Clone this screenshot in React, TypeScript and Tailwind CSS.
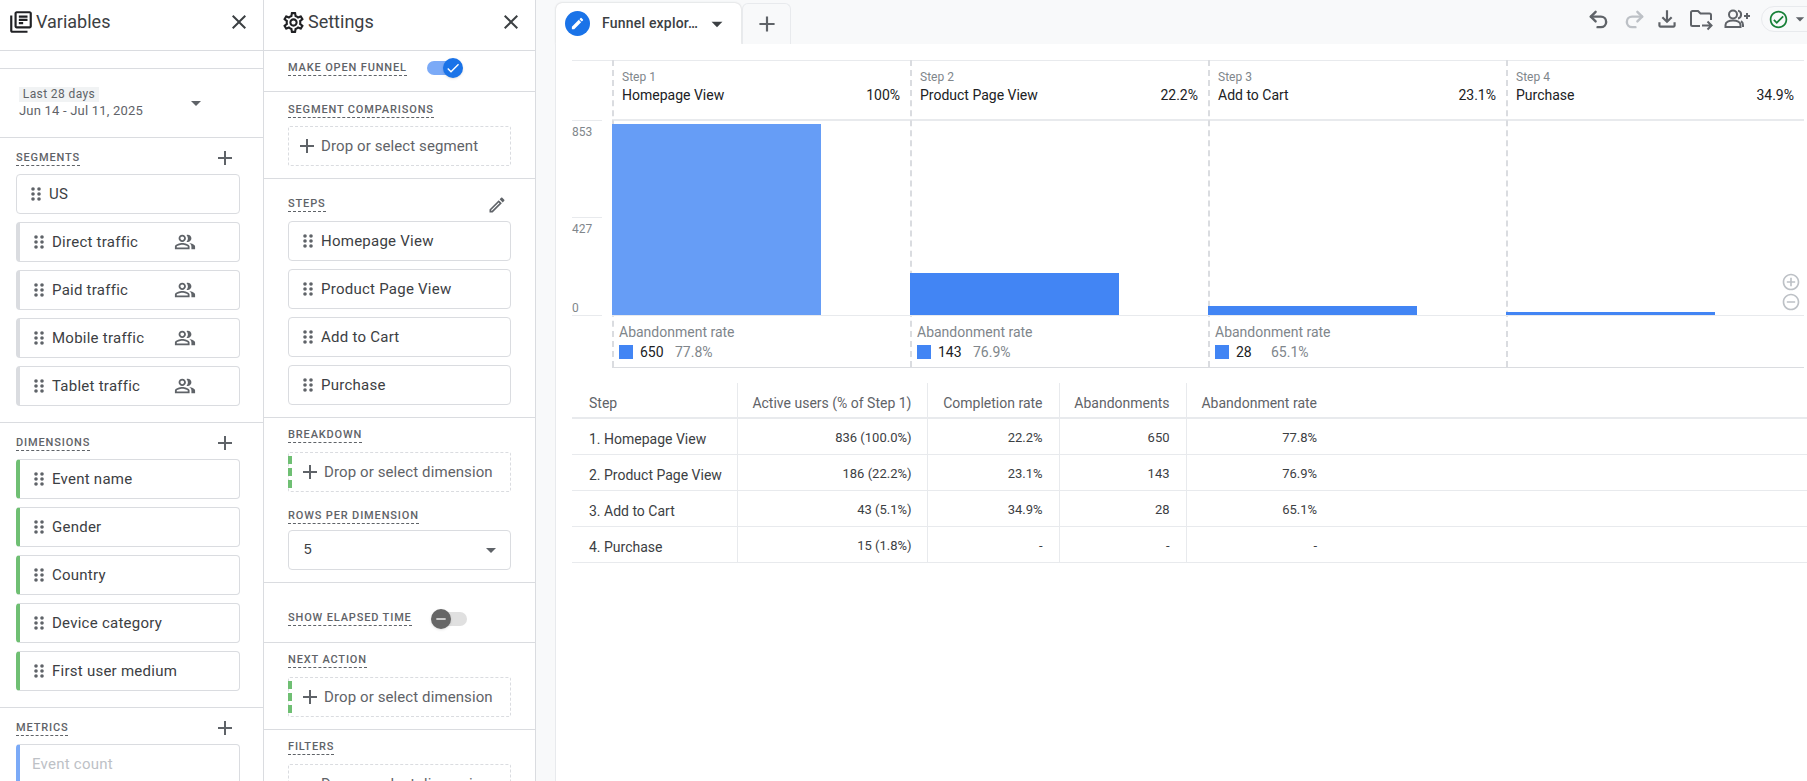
import { Redo2, Undo2 } from "lucide-react";
import {
  MdAdd,
  MdAddCircleOutline,
  MdArrowDropDown,
  MdCheck,
  MdClose,
  MdEdit,
  MdOutlineCheckCircle,
  MdOutlineEdit,
  MdOutlineFileDownload,
  MdOutlineLibraryBooks,
  MdOutlinePeopleAlt,
  MdOutlineSettings,
  MdRemove,
  MdRemoveCircleOutline,
} from "react-icons/md";

const segments = ["Direct traffic", "Paid traffic", "Mobile traffic", "Tablet traffic"];
const dimensions = ["Event name", "Gender", "Country", "Device category", "First user medium"];
const steps = ["Homepage View", "Product Page View", "Add to Cart", "Purchase"];

const funnel = [
  { step: "Step 1", name: "Homepage View", pct: "100%", bar: "h-[191px] bg-[#669df6]", count: "650", rate: "77.8%" },
  { step: "Step 2", name: "Product Page View", pct: "22.2%", bar: "h-[42px] bg-[#4285f4]", count: "143", rate: "76.9%" },
  { step: "Step 3", name: "Add to Cart", pct: "23.1%", bar: "h-[9px] bg-[#4285f4]", count: "28", rate: "65.1%" },
  { step: "Step 4", name: "Purchase", pct: "34.9%", bar: "h-[3px] bg-[#4285f4]", count: "", rate: "" },
];

const rows = [
  ["1. Homepage View", "836 (100.0%)", "22.2%", "650", "77.8%"],
  ["2. Product Page View", "186 (22.2%)", "23.1%", "143", "76.9%"],
  ["3. Add to Cart", "43 (5.1%)", "34.9%", "28", "65.1%"],
  ["4. Purchase", "15 (1.8%)", "-", "-", "-"],
];

function Dots() {
  return (
    <svg width="10" height="14" viewBox="0 0 10 14" className="shrink-0 fill-[#5f6368]">
      <circle cx="2" cy="2" r="1.8" />
      <circle cx="8" cy="2" r="1.8" />
      <circle cx="2" cy="7" r="1.8" />
      <circle cx="8" cy="7" r="1.8" />
      <circle cx="2" cy="12" r="1.8" />
      <circle cx="8" cy="12" r="1.8" />
    </svg>
  );
}

function FolderMove() {
  return (
    <svg width="26" height="26" viewBox="0 0 26 26" fill="none" stroke="#5f6368" strokeWidth="2">
      <path d="M12 20H4.5a1.5 1.5 0 0 1-1.5-1.5V6.500A1.500 1.500 0 0 1 4.500 5h5.500l2.500 2.500h9a1.500 1.500 0 0 1 1.500 1.500v5" />
      <path d="M14 19.500h9M19.500 15.500l4 4-4 4" />
    </svg>
  );
}

function GroupAdd() {
  return (
    <svg width="28" height="26" viewBox="0 0 28 26" fill="none" stroke="#5f6368" strokeWidth="2">
      <circle cx="10" cy="8.500" r="4" />
      <path d="M2.500 21v-2c0-2.800 3.600-4.500 7.500-4.500s7.500 1.700 7.500 4.500v2z" />
      <path d="M15 4.600a4 4 0 0 1 0 7.800M20 21v-2c0-1.800-.8-3-2-3.800" />
      <path d="M21 10h6M24 7v6" />
    </svg>
  );
}

function Label({ text }: { text: string }) {
  return (
    <span className="block h-[16px] w-fit border-b border-dashed border-[#5f6368] text-[11px] leading-[16px] font-medium tracking-[0.85px] text-[#5f6368] uppercase">
      {text}
    </span>
  );
}

function SectionHead({ text }: { text: string }) {
  return (
    <div className="mb-[8px] flex h-[16px] items-start justify-between pr-[10px]">
      <Label text={text} />
      <MdAdd className="-mt-[4px] text-[24px] text-[#5f6368]" />
    </div>
  );
}

function Chip({ text, accent, people }: { text: string; accent?: string; people?: boolean }) {
  return (
    <div className={`flex h-[40px] items-center rounded-[4px] border border-[#dadce0] bg-white text-[15px] tracking-[0.25px] text-[#3c4043] ${accent ? `border-l-4 ${accent} pl-[14px]` : "pl-[14px]"}`}>
      <Dots />
      <span className="ml-[8px] w-[118px] whitespace-nowrap">{text}</span>
      {people && <MdOutlinePeopleAlt className="ml-[4px] text-[22px] text-[#5f6368]" />}
    </div>
  );
}

function DropZone({ text, green, plus = true }: { text: string; green?: boolean; plus?: boolean }) {
  return (
    <div className={`relative flex h-[40px] items-center rounded-[2px] border border-dashed border-[#dadce0] text-[15px] tracking-[0.1px] whitespace-nowrap text-[#5f6368] ${green ? "pl-[9px]" : "pl-[6px]"}`}>
      {green && (
        <div className="absolute top-[3px] -left-px flex h-[32px] w-[4px] flex-col justify-between">
          <div className="h-[8px] bg-[#6fbf73]" />
          <div className="h-[8px] bg-[#6fbf73]" />
          <div className="h-[8px] bg-[#6fbf73]" />
        </div>
      )}
      {plus ? <MdAdd className="mr-[2px] text-[24px] text-[#5f6368]" /> : <div className="w-[26px]" />}
      {text}
    </div>
  );
}

function PanelHeader({ icon, title, pad }: { icon: React.ReactNode; title: string; pad: string }) {
  return (
    <div className={`flex h-[51px] shrink-0 items-center border-b border-[#dadce0] pr-[12px] pb-[6px] ${pad}`}>
      {icon}
      <span className="ml-[2px] text-lg text-[#3c4043]">{title}</span>
      <MdClose className="ml-auto text-[24px] text-[#3c4043]" />
    </div>
  );
}

export default function App() {
  return (
    <div className="flex h-[781px] w-[1807px] overflow-hidden bg-white font-['Roboto',sans-serif]">
      {/* Variables */}
      <div className="w-[264px] shrink-0 border-r border-[#dadce0]">
        <PanelHeader pad="pl-[8px]" icon={<MdOutlineLibraryBooks className="text-[26px] text-[#202124]" />} title="Variables" />
        <div className="h-[18px] border-b border-[#dadce0]" />
        <div className="relative h-[69px] border-b border-[#dadce0] pt-[18px] pl-[19px]">
          <span className="block h-[15px] w-[80px] bg-[#f1f3f4] text-center text-xs leading-[15px] tracking-[0.4px] text-[#5f6368]">Last 28 days</span>
          <span className="mt-[1px] block text-[13px] leading-[16px] tracking-[0.2px] text-[#5f6368]">Jun 14 - Jul 11, 2025</span>
          <MdArrowDropDown className="absolute top-[22px] left-[184px] text-[24px] text-[#5f6368]" />
        </div>
        <div className="border-b border-[#dadce0] px-[16px] pt-[12px] pb-[16px]">
          <SectionHead text="Segments" />
          <div className="flex w-[224px] flex-col gap-[8px]">
            <Chip text="US" />
            {segments.map((s) => (
              <Chip key={s} text={s} accent="border-l-[#dadce0]" people />
            ))}
          </div>
        </div>
        <div className="border-b border-[#dadce0] px-[16px] pt-[12px] pb-[16px]">
          <SectionHead text="Dimensions" />
          <div className="flex w-[224px] flex-col gap-[8px]">
            {dimensions.map((d) => (
              <Chip key={d} text={d} accent="border-l-[#6fbf73]" />
            ))}
          </div>
        </div>
        <div className="px-[16px] pt-[12px]">
          <SectionHead text="Metrics" />
          <div className="flex h-[40px] w-[224px] items-center rounded-[4px] border border-l-4 border-[#dadce0] border-l-[#7baaf7] pl-[12px] text-[15px] tracking-[0.25px] text-[#bdc1c6]">
            Event count
          </div>
        </div>
      </div>

      {/* Settings */}
      <div className="w-[272px] shrink-0 border-r border-[#dadce0]">
        <PanelHeader pad="pl-[17px]" icon={<MdOutlineSettings className="text-[25px] text-[#202124]" />} title="Settings" />
        <div className="flex h-[41px] items-start border-b border-[#dadce0] pt-[9px] pl-[24px]">
          <Label text="Make open funnel" />
          <div className="relative mt-[1px] ml-[20px] h-[14px] w-[28px] rounded-full bg-[#7baaf7]">
            <div className="absolute -top-[3px] left-[16px] flex h-[20px] w-[20px] items-center justify-center rounded-full bg-[#1a73e8] shadow-sm">
              <MdCheck className="text-[16px] text-white" />
            </div>
          </div>
        </div>
        <div className="border-b border-[#dadce0] px-[24px] pt-[10px] pb-[12px]">
          <div className="mb-[8px]">
            <Label text="Segment comparisons" />
          </div>
          <DropZone text="Drop or select segment" />
        </div>
        <div className="border-b border-[#dadce0] px-[24px] pt-[17px] pb-[12px]">
          <div className="mb-[9px] flex h-[16px] items-start justify-between pr-[4px]">
            <Label text="Steps" />
            <MdOutlineEdit className="-mt-[1px] text-[20px] text-[#5f6368]" />
          </div>
          <div className="flex flex-col gap-[8px]">
            {steps.map((s) => (
              <div key={s} className="flex h-[40px] items-center rounded-[4px] border border-[#dadce0] pl-[14px] text-[15px] tracking-[0.25px] text-[#3c4043]">
                <Dots />
                <span className="ml-[8px]">{s}</span>
              </div>
            ))}
          </div>
        </div>
        <div className="border-b border-[#dadce0] px-[24px] pt-[9px] pb-[12px]">
          <div className="mb-[9px]">
            <Label text="Breakdown" />
          </div>
          <DropZone text="Drop or select dimension" green />
          <div className="mt-[16px] mb-[6px]">
            <Label text="Rows per dimension" />
          </div>
          <div className="flex h-[40px] items-center justify-between rounded-[4px] border border-[#dadce0] pr-[7px] pl-[15px] text-sm text-[#3c4043]">
            <span className="-mt-[2px] font-['Liberation_Sans',sans-serif]">5</span>
            <MdArrowDropDown className="text-[24px] text-[#5f6368]" />
          </div>
        </div>
        <div className="flex h-[60px] items-start border-b border-[#dadce0] pt-[27px] pl-[24px]">
          <Label text="Show elapsed time" />
          <div className="relative mt-[2px] ml-[29px] h-[14px] w-[26px] rounded-full bg-[#e0e0e0]">
            <div className="absolute -top-[3px] -left-[10px] flex h-[20px] w-[20px] items-center justify-center rounded-full bg-[#666666] shadow-sm">
              <MdRemove className="text-[16px] text-white" />
            </div>
          </div>
        </div>
        <div className="border-b border-[#dadce0] px-[24px] pt-[9px] pb-[12px]">
          <div className="mb-[9px]">
            <Label text="Next action" />
          </div>
          <DropZone text="Drop or select dimension" green />
        </div>
        <div className="px-[24px] pt-[9px]">
          <div className="mb-[9px]">
            <Label text="Filters" />
          </div>
          <DropZone text="Drop or select dimension" plus={false} />
        </div>
      </div>

      {/* Canvas */}
      <div className="flex min-w-0 flex-1 flex-col bg-[#f8f9fa]">
        <div className="flex h-[44px] shrink-0 items-end pl-[20px]">
          <div className="flex h-[41px] w-[185px] items-center rounded-t-[6px] bg-white pl-[9px] shadow-[0_0_2px_rgba(60,64,67,0.3)]">
            <div className="flex h-[25px] w-[25px] items-center justify-center rounded-full bg-[#1a73e8]">
              <MdEdit className="text-[15px] text-white" />
            </div>
            <span className="ml-[12px] w-[100px] text-[14px] font-medium tracking-[0.2px] whitespace-nowrap text-[#3c4043]">Funnel explor…</span>
            <MdArrowDropDown className="ml-[2px] text-[26px] text-[#3c4043]" />
          </div>
          <div className="ml-[1px] flex h-[41px] w-[49px] items-center justify-center rounded-t-[6px] border border-b-0 border-[#e8eaed] bg-[#f8f9fa]">
            <MdAdd className="text-[26px] text-[#5f6368]" />
          </div>
          <div className="flex h-[44px] flex-1 items-start justify-end overflow-hidden pt-[6px]">
            <div className="flex h-[26px] items-center text-[#5f6368]">
              <Undo2 size={23} strokeWidth={2.5} />
              <Redo2 size={23} strokeWidth={2.5} className="ml-[13px] text-[#bdc1c6]" />
              <MdOutlineFileDownload className="ml-[8px] text-[26px]" />
              <div className="ml-[8px]"><FolderMove /></div>
              <div className="ml-[9px]"><GroupAdd /></div>
            </div>
            <div className="ml-[10px] -mr-[24px] flex h-[26px] w-[70px] shrink-0 items-center rounded-l-full border border-[#e8eaed] pl-[6px]">
              <MdOutlineCheckCircle className="text-[21px] text-[#188038]" />
              <MdArrowDropDown className="ml-[1px] text-[20px] text-[#5f6368]" />
            </div>
          </div>
        </div>

        <div className="relative ml-[19px] flex-1 border-l border-[#e8eaed] bg-white pt-[16px] pl-[16px]">
          <div className="flex">
            <div className="w-[40px] shrink-0">
              <div className="h-[60px] border-t border-[#e8eaed]" />
              <div className="w-[30px] text-xs leading-[14px] text-[#80868b]">
                <div className="h-[97px] border-t border-[#e8eaed] pt-[4px]">853</div>
                <div className="flex h-[99px] flex-col justify-between border-t border-b border-[#e8eaed] pt-[4px]">
                  <span>427</span>
                  <span>0</span>
                </div>
              </div>
            </div>
            {funnel.map((f) => (
              <div key={f.step} className="relative w-[298px] shrink-0 border-b border-[#dadce0]">
                <div className="absolute top-0 bottom-0 left-0 border-l-2 border-dashed border-[#dadce0]" />
                <div className="h-[61px] border-t border-b-2 border-[#e8eaed] pt-[9px] pr-[10px] pl-[10px]">
                  <div className="text-xs leading-[14px] text-[#80868b]">{f.step}</div>
                  <div className="mt-[1px] flex justify-between text-sm leading-[20px] text-[#202124]">
                    <span>{f.name}</span>
                    <span>{f.pct}</span>
                  </div>
                </div>
                <div className="relative flex h-[195px] flex-col justify-end border-b border-[#e8eaed]">
                  <div className={`w-[209px] ${f.bar}`} />
                </div>
                <div className="h-[51px] pt-[7px] pl-[7px]">
                  {f.count && (
                    <>
                      <div className="text-sm leading-[18px] text-[#80868b]">Abandonment rate</div>
                      <div className="mt-[1px] flex h-[20px] items-center text-sm">
                        <div className="h-[14px] w-[14px] bg-[#4285f4]" />
                        <span className="ml-[7px] w-[35px] text-[#202124]">{f.count}</span>
                        <span className="text-[#80868b]">{f.rate}</span>
                      </div>
                    </>
                  )}
                </div>
              </div>
            ))}
          </div>
          {/* zoom buttons sit on top of the chart */}
          <div className="absolute top-[228px] right-[6px] flex flex-col text-[#bdc1c6]">
            <MdAddCircleOutline className="text-[20px]" />
            <MdRemoveCircleOutline className="text-[20px]" />
          </div>

          <table className="mt-[15px] w-[1235px] table-fixed border-collapse text-[13px] text-[#3c4043]">
            <colgroup>
              <col className="w-[165px]" />
              <col className="w-[190px]" />
              <col className="w-[132px]" />
              <col className="w-[127px]" />
              <col className="w-[147px]" />
              <col />
            </colgroup>
            <thead>
              <tr className="h-[35px] border-b-2 border-[#e8eaed] text-sm font-normal text-[#5f6368]">
                <th className="border-r border-[#e8eaed] pt-[6px] pl-[17px] text-left font-normal">Step</th>
                <th className="border-r border-[#e8eaed] pt-[6px] pr-[15px] text-right font-normal">Active users (% of Step 1)</th>
                <th className="border-r border-[#e8eaed] pt-[6px] pr-[16px] text-right font-normal">Completion rate</th>
                <th className="border-r border-[#e8eaed] pt-[6px] pr-[16px] text-right font-normal">Abandonments</th>
                <th className="pt-[6px] pr-[16px] text-right font-normal">Abandonment rate</th>
                <th />
              </tr>
            </thead>
            <tbody>
              {rows.map((r) => (
                <tr key={r[0]} className="h-[36px] border-b border-[#e8eaed]">
                  <td className="border-r border-[#e8eaed] pt-[6px] pl-[17px] text-sm whitespace-nowrap">{r[0]}</td>
                  <td className="border-r border-[#e8eaed] pt-[3px] pr-[15px] text-right">{r[1]}</td>
                  <td className="border-r border-[#e8eaed] pt-[3px] pr-[16px] text-right">{r[2]}</td>
                  <td className="border-r border-[#e8eaed] pt-[3px] pr-[16px] text-right">{r[3]}</td>
                  <td className="pt-[3px] pr-[16px] text-right">{r[4]}</td>
                  <td />
                </tr>
              ))}
            </tbody>
          </table>
        </div>
      </div>
    </div>
  );
}
